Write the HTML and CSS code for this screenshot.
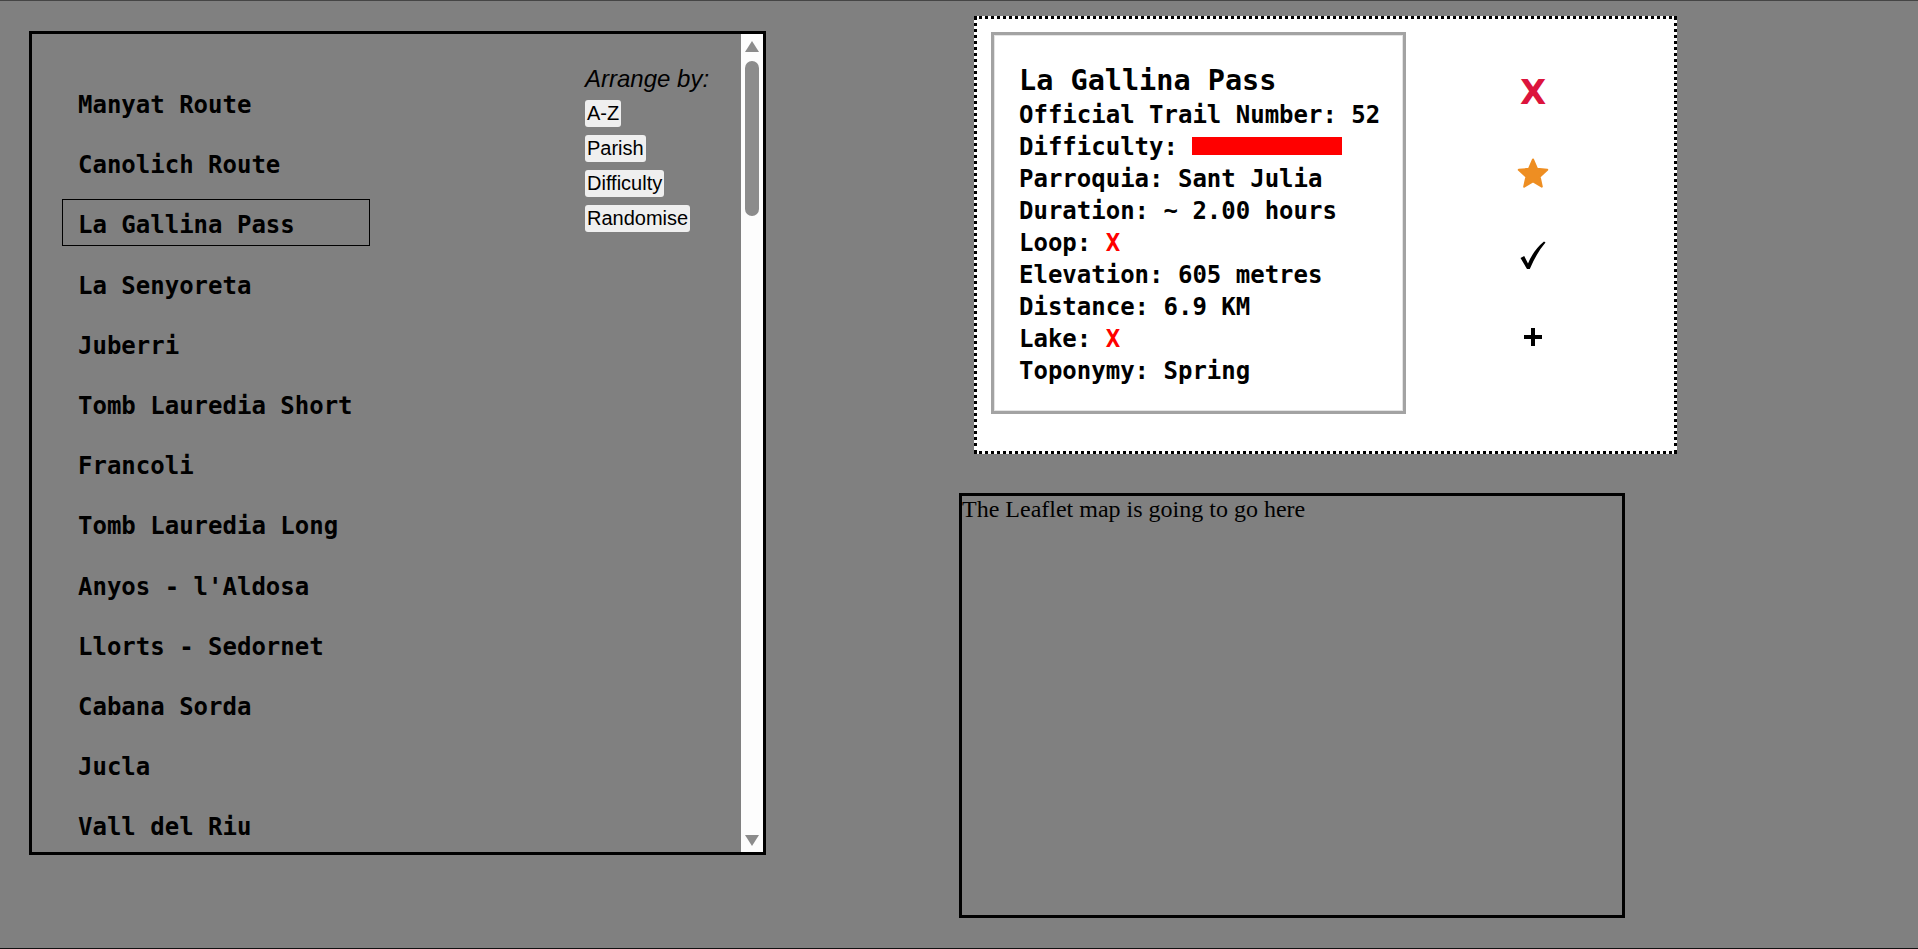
FILE: index.html
```html
<!DOCTYPE html>
<html lang="en">
<head>
<meta charset="utf-8">
<title>Andorra Trails</title>
<link rel="stylesheet" href="styles.css">
</head>
<body>
<div class="page">
  <section class="list-panel">
    <div class="list-view">
      <ul class="trails">
        <li>Manyat Route</li>
        <li>Canolich Route</li>
        <li class="selected">La Gallina Pass</li>
        <li>La Senyoreta</li>
        <li>Juberri</li>
        <li>Tomb Lauredia Short</li>
        <li>Francoli</li>
        <li>Tomb Lauredia Long</li>
        <li>Anyos - l'Aldosa</li>
        <li>Llorts - Sedornet</li>
        <li>Cabana Sorda</li>
        <li>Jucla</li>
        <li>Vall del Riu</li>
      </ul>
      <div class="controls">
        <p class="arrange-label">Arrange by:</p>
        <button class="sort-btn">A-Z</button>
        <button class="sort-btn">Parish</button>
        <button class="sort-btn">Difficulty</button>
        <button class="sort-btn">Randomise</button>
      </div>
    </div>
    <div class="scrollbar" aria-hidden="true">
      <span class="sb-arrow sb-up"></span>
      <span class="sb-thumb"></span>
      <span class="sb-rest"></span>
      <span class="sb-arrow sb-down"></span>
    </div>
  </section>

  <div class="right-col">
    <section class="info-panel">
      <div class="card">
        <h2 class="card-title">La Gallina Pass</h2>
        <div class="card-line">Official Trail Number: 52</div>
        <div class="card-line">Difficulty: <span class="diff-bar" style="width:150px"></span></div>
        <div class="card-line">Parroquia: Sant Julia</div>
        <div class="card-line">Duration: ~ 2.00 hours</div>
        <div class="card-line">Loop: <span class="no">X</span></div>
        <div class="card-line">Elevation: 605 metres</div>
        <div class="card-line">Distance: 6.9 KM</div>
        <div class="card-line">Lake: <span class="no">X</span></div>
        <div class="card-line">Toponymy: Spring</div>
      </div>
      <div class="actions">
        <div class="action action-close">X</div>
        <div class="action">
          <svg width="32" height="32" viewBox="0 0 32 32"><path d="M16 1.5 L20.11 10.84 L30.27 11.86 L22.66 18.66 L24.82 28.64 L16 23.5 L7.18 28.64 L9.34 18.66 L1.73 11.86 L11.89 10.84 Z" fill="#ee8e22" stroke="#ee8e22" stroke-width="2" stroke-linejoin="round"/></svg>
        </div>
        <div class="action">
          <svg width="26" height="29" viewBox="0 0 26 29"><path d="M0.5 17 L4.2 15 L8 22.5 Q13.5 9 24 0.5 L25.5 1.6 Q16.5 12 9.8 28 L7 28 Z" fill="#000"/></svg>
        </div>
        <div class="action">
          <svg width="18" height="18" viewBox="0 0 18 18"><rect x="0" y="7" width="18" height="4" fill="#000"/><rect x="7" y="0" width="4" height="18" fill="#000"/></svg>
        </div>
      </div>
    </section>
    <div class="map">The Leaflet map is going to go here</div>
  </div>
</div>
</body>
</html>
```

FILE: styles.css
```css
html, body {
  margin: 0;
  padding: 0;
  background: #808080;
}

.page {
  box-sizing: border-box;
  height: 949px;
  border-top: 1px solid #454545;
  border-bottom: 1px solid #111;
  display: flex;
  align-items: flex-start;
  overflow: hidden;
}

/* ---------- trail list ---------- */
.list-panel {
  box-sizing: border-box;
  flex: none;
  width: 737px;
  height: 824px;
  margin: 30px 0 0 29px;
  border: 3px solid #000;
  overflow: hidden;
  display: flex;
}

.list-view {
  flex: 1;
  min-width: 0;
  overflow: hidden;
  display: flex;
  align-items: flex-start;
}

.scrollbar {
  flex: none;
  width: 22px;
  background: #fdfdfd;
  display: flex;
  flex-direction: column;
  align-items: center;
}

.sb-arrow {
  display: block;
  width: 0;
  height: 0;
  border-left: 7.5px solid transparent;
  border-right: 7.5px solid transparent;
}

.sb-up {
  margin-top: 7px;
  border-bottom: 11px solid #8c8c8c;
}

.sb-down {
  margin-bottom: 6px;
  border-top: 11px solid #8c8c8c;
}

.sb-thumb {
  display: block;
  width: 14px;
  height: 155px;
  margin-top: 9px;
  border-radius: 7px;
  background: #8c8c8c;
}

.sb-rest {
  flex: 1;
}

.trails {
  box-sizing: border-box;
  flex: none;
  width: 338px;
  list-style: none;
  margin: 0;
  padding: 45px 0 0 30px;
  font-family: "DejaVu Sans Mono", monospace;
  font-weight: bold;
  font-size: 24px;
  color: #000;
}

.trails li {
  box-sizing: border-box;
  width: 308px;
  line-height: 28px;
  padding: 11px 15px 6px;
  border: 1px solid transparent;
  margin-bottom: 13.2px;
  white-space: nowrap;
}

.trails li.selected {
  border-color: #000;
}

.controls {
  flex: none;
  margin-left: 215px;
  padding-top: 31px;
  display: flex;
  flex-direction: column;
  align-items: flex-start;
}

.arrange-label {
  margin: 0 0 7px;
  font-family: "Liberation Sans", Arial, sans-serif;
  font-style: italic;
  font-size: 24px;
  color: #000;
}

.sort-btn {
  font-family: "Liberation Sans", Arial, sans-serif;
  font-size: 20px;
  line-height: 23px;
  color: #000;
  background: #efefef;
  border: 0;
  border-radius: 3px;
  padding: 2px;
  margin: 0 0 8px;
}

/* ---------- right column ---------- */
.right-col {
  flex: none;
  margin-left: 193px;
  display: flex;
  flex-direction: column;
  align-items: flex-start;
}

.info-panel {
  box-sizing: border-box;
  width: 703px;
  height: 438px;
  margin: 15px 0 0 15px;
  border: 3px dotted #000;
  background: #fff;
  padding: 13px 0 0 14px;
  display: flex;
  align-items: flex-start;
}

.card {
  box-sizing: border-box;
  flex: none;
  width: 415px;
  padding: 29px 20px 24px 25px;
  border: 3px solid #a3a3a3;
  box-shadow: inset 0 0 0 1px #e4e4e4;
  font-family: "DejaVu Sans Mono", monospace;
  font-weight: bold;
  font-size: 24px;
  color: #000;
  white-space: nowrap;
}

.card-title {
  margin: 0 0 2.2px;
  font-size: 28.5px;
  line-height: 33px;
  font-weight: bold;
}

.card-line {
  line-height: 32px;
}

.diff-bar {
  display: inline-block;
  height: 18px;
  background: #ff0000;
}

.no {
  color: #ff0000;
}

.actions {
  flex: none;
  width: 80px;
  margin-left: 87px;
  padding-top: 40px;
  display: flex;
  flex-direction: column;
  align-items: center;
  gap: 41.5px;
}

.action {
  height: 40px;
  display: flex;
  align-items: center;
  justify-content: center;
}

.action-close {
  font-family: "DejaVu Sans", sans-serif;
  font-weight: bold;
  font-size: 34px;
  line-height: 40px;
  color: #dc143c;
}

.map {
  box-sizing: border-box;
  width: 666px;
  height: 425px;
  margin-top: 39px;
  border: 3px solid #000;
  font-family: "Liberation Serif", "Times New Roman", serif;
  font-size: 24px;
  color: #000;
}
```
